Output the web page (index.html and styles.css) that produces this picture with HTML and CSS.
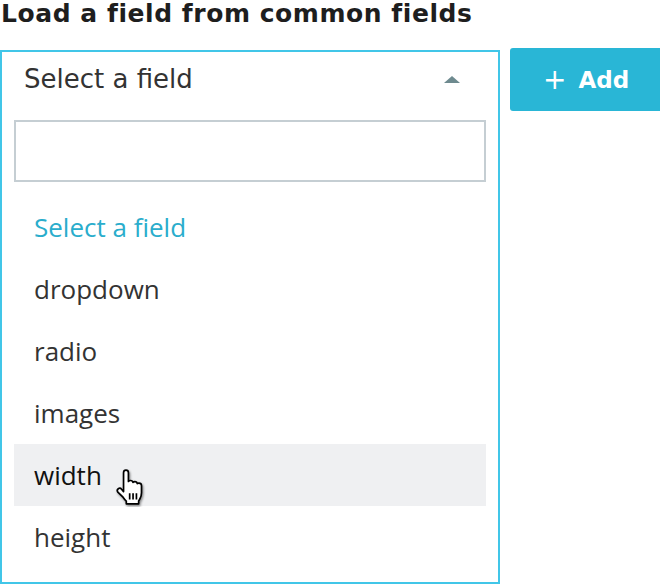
FILE: index.html
```html
<!DOCTYPE html>
<html>
<head>
<meta charset="utf-8">
<link rel="stylesheet" href="styles.css">
</head>
<body>
<div class="page">
  <h1 class="title">Load a field from common fields</h1>
  <div class="row">
    <div class="select">
      <div class="select-head">
        <span class="select-value">Select a field</span>
        <span class="arrow"></span>
      </div>
      <div class="drop">
        <div class="search"></div>
        <ul class="options">
          <li class="opt selected">Select a field</li>
          <li class="opt">dropdown</li>
          <li class="opt">radio</li>
          <li class="opt">images</li>
          <li class="opt hover">width
            <svg class="cursor" width="36" height="38" viewBox="0 0 34 36">
              <defs>
                <filter id="sh" x="-30%" y="-30%" width="160%" height="160%">
                  <feDropShadow dx="1" dy="1.5" stdDeviation="1" flood-color="#000" flood-opacity="0.45"/>
                </filter>
              </defs>
              <path filter="url(#sh)" d="M9 3.5c0-1.4 1-2.4 2.3-2.4s2.3 1 2.3 2.4v8.3c0.5-0.6 1.2-0.9 2-0.9 1.2 0 2.1 0.7 2.3 1.8 0.5-0.5 1.1-0.7 1.8-0.7 1.2 0 2.1 0.8 2.3 1.9 0.4-0.3 1-0.5 1.6-0.5 1.4 0 2.4 1.1 2.4 2.5v6.6c0 2.4-0.6 4.4-1.7 6.2l-1 1.6v2.7H11.6v-2.6c-1.2-0.9-2.4-2.5-3.6-4.3L3.6 22c-0.8-1.2-0.6-2.6 0.4-3.3 1-0.7 2.3-0.5 3.1 0.5L9 21.4z" fill="#fff" stroke="#000" stroke-width="1.6" stroke-linejoin="round"/>
              <path d="M14.8 23v6M18 23v6M21.2 23v6" stroke="#000" stroke-width="1.6"/>
            </svg>
          </li>
          <li class="opt">height</li>
        </ul>
      </div>
    </div>
    <button class="add"><span class="plus">+</span><span>Add</span></button>
  </div>
</div>
</body>
</html>
```
FILE: styles.css
```css
html, body {
  margin: 0;
  padding: 0;
  background: #fff;
}
.page {
  width: 660px;
  height: 584px;
  overflow: hidden;
}
.title {
  margin: 0;
  height: 48px;
  padding-left: 1px;
  font-family: "DejaVu Sans", Verdana, sans-serif;
  font-weight: bold;
  font-size: 25px;
  letter-spacing: 0.55px;
  line-height: 28px;
  color: #1e1e1e;
}
.row {
  display: flex;
  align-items: flex-start;
}
.select {
  margin-top: 2px;
  width: 500px;
  height: 534px;
  box-sizing: border-box;
  border: 2px solid #41c6e8;
  flex: none;
}
.select-head {
  height: 54px;
  display: flex;
  align-items: center;
  justify-content: space-between;
  padding: 0 38px 0 22px;
}
.select-value {
  font-family: "DejaVu Sans", Verdana, sans-serif;
  font-size: 26px;
  color: #333;
}
.arrow {
  width: 0;
  height: 0;
  border-left: 8px solid transparent;
  border-right: 8px solid transparent;
  border-bottom: 7px solid #6e8a8f;
}
.drop {
  padding: 14px 12px 0 12px;
}
.search {
  height: 62px;
  box-sizing: border-box;
  border: 2px solid #c5ced3;
}
.options {
  list-style: none;
  margin: 14px 0 0 0;
  padding: 0;
}
.opt {
  position: relative;
  height: 62px;
  display: flex;
  align-items: center;
  padding-left: 20px;
  font-family: "Open Sans", sans-serif;
  font-size: 26px;
  color: #333;
}
.opt.selected {
  color: #2aadcc;
}
.opt.hover {
  background: #eff0f2;
  color: #111;
}
.cursor {
  position: absolute;
  left: 100px;
  top: 25px;
}
.add {
  margin-left: 10px;
  width: 160px;
  height: 63px;
  border: none;
  border-radius: 3px;
  background: #29b6d6;
  color: #fff;
  font-family: "DejaVu Sans", Verdana, sans-serif;
  font-weight: bold;
  font-size: 23px;
  display: flex;
  align-items: center;
  padding: 0 0 0 33px;
  gap: 12px;
  flex: none;
}
.plus {
  font-weight: normal;
  font-size: 28px;
  line-height: 1;
}
```
